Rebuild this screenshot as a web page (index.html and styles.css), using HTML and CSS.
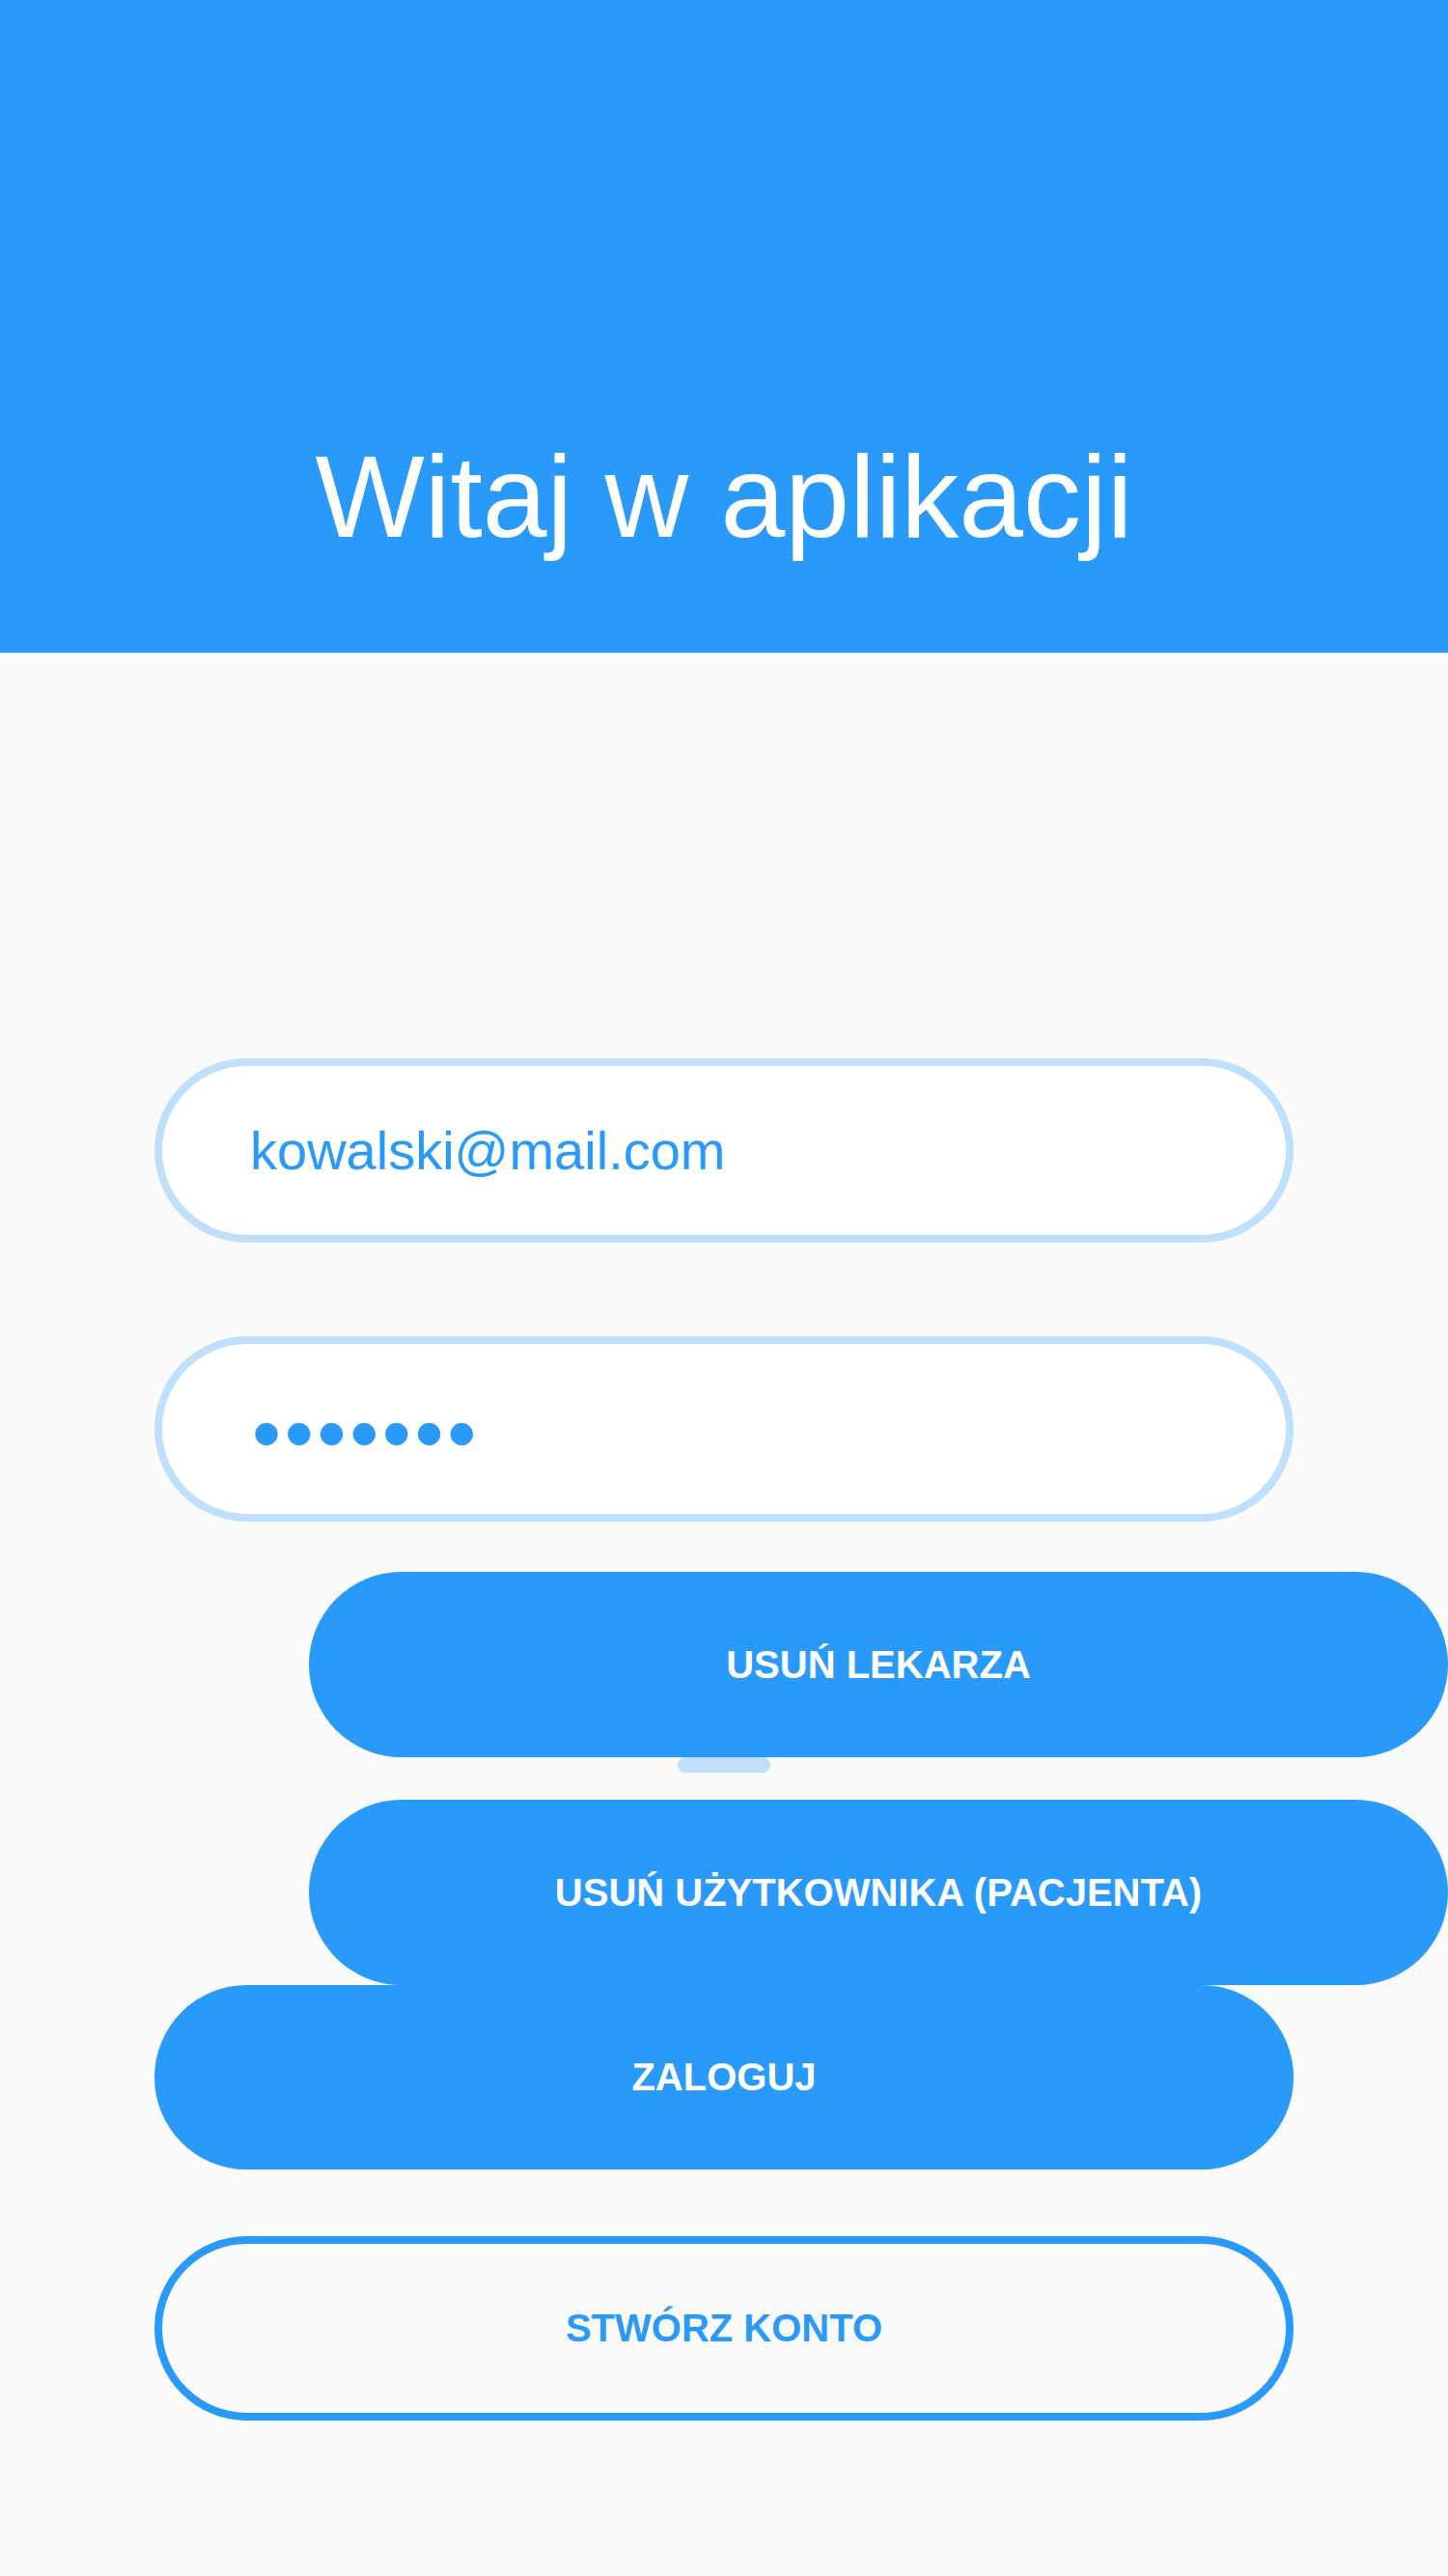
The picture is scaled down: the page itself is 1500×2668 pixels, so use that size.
FILE: index.html
```html
<!DOCTYPE html>
<html lang="pl">
<head>
<meta charset="utf-8">
<title>Witaj w aplikacji</title>
<link rel="stylesheet" href="styles.css">
</head>
<body>
<header class="hero">
  <h1 class="hero-title">Witaj w aplikacji</h1>
</header>
<main class="login">
  <div class="field field-email"><span class="field-text">kowalski@mail.com</span></div>
  <div class="field field-password"><span class="field-dots">•••••••</span></div>
  <div class="admin-actions">
    <button class="btn btn-solid btn-shift">USUŃ LEKARZA</button>
    <div class="pill"></div>
    <button class="btn btn-solid btn-shift">USUŃ UŻYTKOWNIKA (PACJENTA)</button>
  </div>
  <button class="btn btn-solid btn-login">ZALOGUJ</button>
  <button class="btn btn-outline">STWÓRZ KONTO</button>
</main>
</body>
</html>
```

FILE: styles.css
```css
html, body {
  margin: 0;
  padding: 0;
}
body {
  width: 1500px;
  height: 2668px;
  overflow: hidden;
  background: #fafafa;
  font-family: "Liberation Sans", Arial, sans-serif;
}
.hero {
  box-sizing: border-box;
  height: 676px;
  padding-top: 445px;
  background: #2999fa;
}
.hero-title {
  margin: 0;
  font-size: 120px;
  font-weight: 400;
  line-height: normal;
  color: #ffffff;
  text-align: center;
}
.login {
  width: 1180px;
  margin: 0 auto;
  padding-top: 420px;
  display: flex;
  flex-direction: column;
}
.field {
  box-sizing: border-box;
  height: 191px;
  border: 8px solid #bee0fc;
  border-radius: 96px;
  background: #ffffff;
  display: flex;
  align-items: center;
  padding-left: 91px;
}
.field-password {
  margin-top: 97px;
  height: 192px;
}
.field-text {
  font-size: 56px;
  color: #2999fa;
}
.field-dots {
  font-size: 86px;
  letter-spacing: 3.6px;
  color: #2999fa;
  line-height: 1;
  margin-top: 8px;
  margin-left: 2px;
}
.admin-actions {
  margin-top: 52px;
  display: flex;
  flex-direction: column;
}
.btn {
  box-sizing: border-box;
  flex: none;
  width: 1180px;
  height: 192px;
  padding: 0;
  border: none;
  border-radius: 96px;
  font-family: "Liberation Sans", Arial, sans-serif;
  font-size: 40px;
  font-weight: 700;
  cursor: pointer;
}
.btn-solid {
  background: #2999fa;
  color: #ffffff;
}
.btn-shift {
  margin-left: 160px;
}
.pill {
  align-self: center;
  width: 96px;
  height: 16px;
  border-radius: 8px;
  background: #bee0fc;
  margin-bottom: 28px;
}
.btn-login {
  height: 191px;
}
.btn-outline {
  margin-top: 69px;
  height: 191px;
  background: transparent;
  border: 8px solid #2999fa;
  color: #2999fa;
}
```
